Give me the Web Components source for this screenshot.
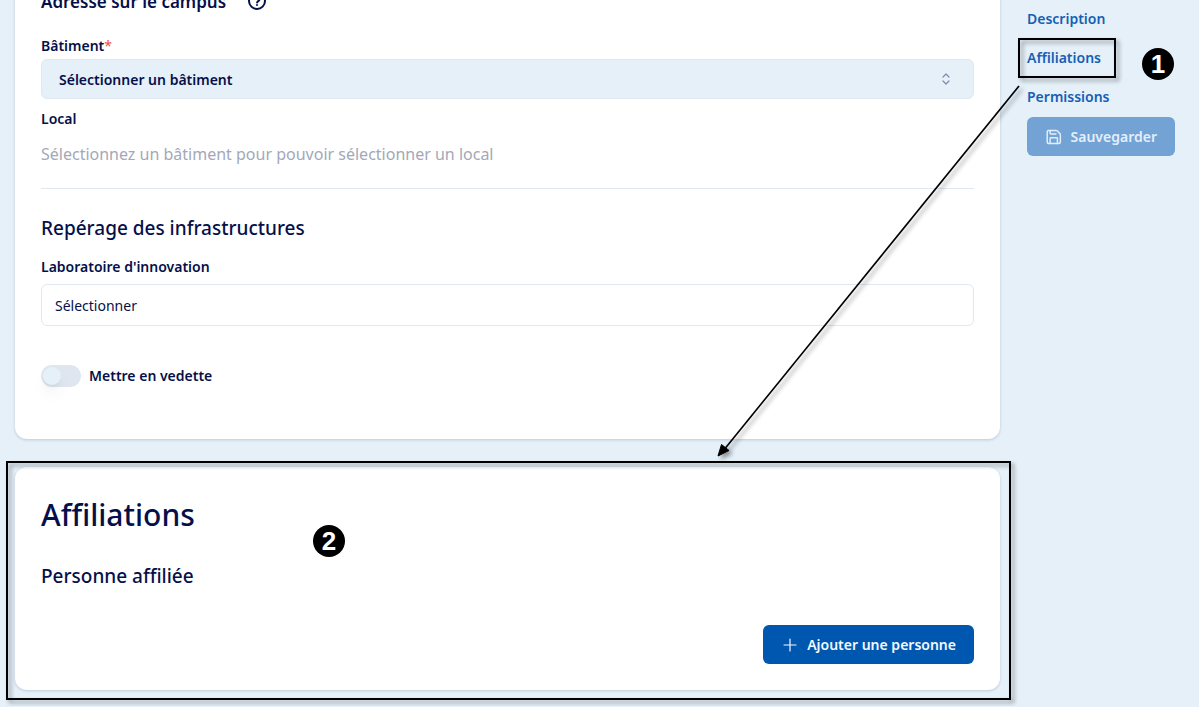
<!DOCTYPE html>
<html lang="fr">
<head>
<meta charset="UTF-8">
<meta name="viewport" content="width=device-width, initial-scale=1">
<title>Affiliations</title>
<style>
    html, body {
        margin: 0;
        min-height: 100%;
    }

    body {
        background: #e5f0f9;
        color: #05104a;
        font-family: "Noto Sans", "Open Sans", sans-serif;
        font-size: 14px;
        overflow: hidden;
    }
</style>
</head>
<body>
<infra-page></infra-page>

<script>
class UiCard extends HTMLElement {
    constructor() {
        super();
        this.attachShadow({ mode: 'open' });
        this.shadowRoot.innerHTML = `
            <style>
                :host {
                    display: block;
                    box-sizing: border-box;
                    background: #fff;
                    border-radius: 12px;
                    box-shadow: 0 1px 3px rgba(5, 30, 80, 0.18);
                    padding: 26px;
                }
            </style>
            <slot></slot>
        `;
    }
}

class FormSelect extends HTMLElement {
    constructor() {
        super();
        this.attachShadow({ mode: 'open' });
    }

    connectedCallback() {
        const required = this.hasAttribute('required');
        const filled = this.hasAttribute('filled');
        this.shadowRoot.innerHTML = `
            <style>
                :host {
                    display: block;
                }

                label {
                    display: block;
                    font-weight: 600;
                    line-height: 20px;
                    margin-bottom: ${filled ? 3 : 7}px;
                }

                .star {
                    color: #f04a4a;
                    font-weight: 400;
                }

                .control {
                    display: grid;
                    align-items: center;
                }

                select, svg {
                    grid-area: 1 / 1;
                }

                select {
                    appearance: none;
                    box-sizing: border-box;
                    width: 100%;
                    height: ${filled ? 40 : 42}px;
                    margin: 0;
                    padding: 0 ${filled ? 17 : 13}px;
                    border: 1px solid #e1e8f2;
                    border-radius: 6px;
                    background: ${filled ? '#e5f0f9' : '#fff'};
                    color: inherit;
                    font: inherit;
                    font-weight: ${filled ? 600 : 400};
                }

                svg {
                    justify-self: end;
                    margin-right: 20px;
                    pointer-events: none;
                }
            </style>
            <label for="field">${this.getAttribute('label')}${required ? '<span class="star">*</span>' : ''}</label>
            <div class="control">
                <select id="field"><option>${this.getAttribute('placeholder')}</option></select>
                ${filled ? `
                    <svg width="16" height="16" viewBox="0 0 16 16" fill="none" stroke="#8089a8" stroke-width="1.2" stroke-linecap="round" stroke-linejoin="round">
                        <path d="M5 6l3-3 3 3M5 10l3 3 3-3"/>
                    </svg>
                ` : ''}
            </div>
        `;
    }
}

class UiSwitch extends HTMLElement {
    constructor() {
        super();
        this.attachShadow({ mode: 'open' });
        this.shadowRoot.innerHTML = `
            <style>
                :host {
                    display: flex;
                    align-items: center;
                    gap: 8px;
                }

                input {
                    appearance: none;
                    display: flex;
                    box-sizing: border-box;
                    width: 40px;
                    height: 22px;
                    margin: 0;
                    padding: 2px;
                    border-radius: 11px;
                    background: #dfe6f0;
                }

                input::before {
                    content: "";
                    width: 18px;
                    height: 18px;
                    border-radius: 50%;
                    background: #e5f0f9;
                    box-shadow: 0 10px 15px -3px rgba(0, 0, 0, 0.1), 0 4px 6px -4px rgba(0, 0, 0, 0.1);
                }

                input:checked {
                    background: #0057b0;
                    justify-content: flex-end;
                }

                label {
                    font-weight: 600;
                    line-height: 20px;
                }
            </style>
            <input type="checkbox" role="switch" id="toggle">
            <label for="toggle"><slot></slot></label>
        `;
    }
}

const ICONS = {
    plus: '<path d="M4 12h16M12 4v16"/>',
    save: `<path d="M15.2 3a2 2 0 0 1 1.4.6l3.8 3.8a2 2 0 0 1 .6 1.4V19a2 2 0 0 1-2 2H5a2 2 0 0 1-2-2V5a2 2 0 0 1 2-2z"/>
        <path d="M17 21v-7a1 1 0 0 0-1-1H8a1 1 0 0 0-1 1v7M7 3v4a1 1 0 0 0 1 1h7"/>`
};

class UiButton extends HTMLElement {
    constructor() {
        super();
        this.attachShadow({ mode: 'open' });
    }

    connectedCallback() {
        const icon = this.getAttribute('icon');
        this.shadowRoot.innerHTML = `
            <style>
                :host {
                    display: block;
                }

                button {
                    display: flex;
                    align-items: center;
                    justify-content: center;
                    gap: 8px;
                    width: 100%;
                    height: 39px;
                    margin: 0;
                    padding: 0 18px;
                    border: none;
                    border-radius: 6px;
                    background: #0057b0;
                    color: #f4f9ff;
                    font: inherit;
                    font-weight: 600;
                    white-space: nowrap;
                }

                button:disabled {
                    background: #73a3d4;
                    color: #e3eefa;
                }
            </style>
            <button type="button" ${this.hasAttribute('disabled') ? 'disabled' : ''}>
                <svg width="18" height="18" viewBox="0 0 24 24" fill="none" stroke="currentColor" stroke-width="${icon === 'plus' ? 1.6 : 2}" stroke-linecap="round" stroke-linejoin="round" aria-hidden="true">${ICONS[icon]}</svg>
                <slot></slot>
            </button>
        `;
    }
}

// Black outline with a drop shadow, drawn around whatever is slotted in.
class CalloutFrame extends HTMLElement {
    constructor() {
        super();
        this.attachShadow({ mode: 'open' });
        this.shadowRoot.innerHTML = `
            <style>
                :host {
                    display: block;
                    position: relative;
                }

                .frame {
                    position: absolute;
                    inset: var(--frame-inset, -8px);
                    border: 2px solid #000;
                    filter: drop-shadow(3px 3px 2px rgba(0, 0, 0, 0.4));
                    pointer-events: none;
                }
            </style>
            <slot></slot>
            <div class="frame"></div>
        `;
    }
}

class StepBadge extends HTMLElement {
    constructor() {
        super();
        this.attachShadow({ mode: 'open' });
        this.shadowRoot.innerHTML = `
            <style>
                :host {
                    position: absolute;
                    display: flex;
                    align-items: center;
                    justify-content: center;
                    width: 32px;
                    height: 32px;
                    border-radius: 50%;
                    background: #000;
                    color: #fff;
                    font: 700 26px/32px "Liberation Sans", Arial, sans-serif;
                }
            </style>
            <slot></slot>
        `;
    }
}

class SideNav extends HTMLElement {
    constructor() {
        super();
        this.attachShadow({ mode: 'open' });
        this.shadowRoot.innerHTML = `
            <style>
                :host {
                    display: block;
                    position: relative;
                    padding-top: 7px;
                }

                nav {
                    display: flex;
                    flex-direction: column;
                    gap: 15px;
                    margin-bottom: 8px;
                }

                a {
                    display: block;
                    color: #1560b5;
                    font-weight: 600;
                    line-height: 24px;
                    text-decoration: none;
                }

                callout-frame {
                    --frame-inset: -8px 59px -8px -9px;
                }

                step-badge {
                    top: 48px;
                    right: 1px;
                }
            </style>
            <nav>
                <a href="#description">Description</a>
                <callout-frame><a href="#affiliations">Affiliations</a></callout-frame>
                <a href="#permissions">Permissions</a>
            </nav>
            <ui-button icon="save" disabled>Sauvegarder</ui-button>
            <step-badge>1</step-badge>
        `;
    }
}

class InfraPage extends HTMLElement {
    constructor() {
        super();
        this.attachShadow({ mode: 'open' });
        this.shadowRoot.innerHTML = `
            <style>
                :host {
                    display: grid;
                    grid-template-columns: minmax(0, 1fr) 148px;
                    column-gap: 27px;
                    position: relative;
                    padding: 0 24px 16px 15px;
                }

                main {
                    display: flex;
                    flex-direction: column;
                    gap: 28px;
                }

                /* the form is scrolled: its top edge sits above the window */
                .details {
                    margin-top: -38px;
                    padding-bottom: 52px;
                }

                h2, h3, p {
                    margin: 0;
                    font-weight: 500;
                }

                h2 {
                    font-size: 30px;
                    line-height: 44px;
                }

                h3 {
                    font-size: 19px;
                    line-height: 28px;
                }

                .title {
                    display: flex;
                    align-items: center;
                    gap: 21px;
                    margin-bottom: 20px;
                }

                .title h3 {
                    font-size: 17px;
                    font-weight: 600;
                }

                .room-label {
                    margin-top: 10px;
                    font-weight: 600;
                    line-height: 20px;
                }

                .room-hint {
                    margin-top: 13px;
                    color: #a3a8b8;
                    font-size: 16px;
                    font-weight: 400;
                    line-height: 24px;
                }

                hr {
                    margin: 22px 0 25px;
                    border: none;
                    border-top: 1px solid #dfe7f1;
                }

                .tracking {
                    margin-bottom: 15px;
                }

                ui-switch {
                    margin-top: 39px;
                }

                .people {
                    margin: 25px 0 35px;
                }

                .actions {
                    display: flex;
                    justify-content: flex-end;
                }

                step-badge {
                    top: 58px;
                    left: 298px;
                }

                .arrow {
                    position: absolute;
                    top: 76px;
                    right: 169px;
                    pointer-events: none;
                    filter: drop-shadow(3px 3px 2px rgba(0, 0, 0, 0.4));
                }
            </style>
            <main>
                <ui-card class="details">
                    <div class="title">
                        <h3>Adresse sur le campus</h3>
                        <svg width="20" height="20" viewBox="0 0 20 20" fill="none" stroke="currentColor" stroke-width="2" stroke-linecap="round" role="img" aria-label="Aide">
                            <circle cx="10" cy="9" r="8"/>
                            <path d="M7.6 6.6a2.5 2.5 0 0 1 4.9.8c0 1.6-2.4 1.8-2.4 3.2M10 13v.1"/>
                        </svg>
                    </div>
                    <form-select label="Bâtiment" placeholder="Sélectionner un bâtiment" required filled></form-select>
                    <p class="room-label">Local</p>
                    <p class="room-hint">Sélectionnez un bâtiment pour pouvoir sélectionner un local</p>
                    <hr>
                    <h3 class="tracking">Repérage des infrastructures</h3>
                    <form-select label="Laboratoire d'innovation" placeholder="Sélectionner"></form-select>
                    <ui-switch>Mettre en vedette</ui-switch>
                </ui-card>
                <callout-frame style="--frame-inset: -6px -11px -10px -9px">
                    <ui-card id="affiliations">
                        <h2>Affiliations</h2>
                        <h3 class="people">Personne affiliée</h3>
                        <div class="actions">
                            <ui-button icon="plus">Ajouter une personne</ui-button>
                        </div>
                    </ui-card>
                    <step-badge>2</step-badge>
                </callout-frame>
            </main>
            <side-nav></side-nav>
            <svg class="arrow" width="320" height="390" viewBox="0 0 320 390" aria-hidden="true">
                <path d="M309 10L13 375" stroke="#000" stroke-width="1.7"/>
                <path d="M8 380L11.5 368.5L19 374.5Z" fill="#000" stroke="#000"/>
            </svg>
        `;
    }
}

customElements.define('ui-card', UiCard);
customElements.define('form-select', FormSelect);
customElements.define('ui-switch', UiSwitch);
customElements.define('ui-button', UiButton);
customElements.define('callout-frame', CalloutFrame);
customElements.define('step-badge', StepBadge);
customElements.define('side-nav', SideNav);
customElements.define('infra-page', InfraPage);
</script>
</body>
</html>
